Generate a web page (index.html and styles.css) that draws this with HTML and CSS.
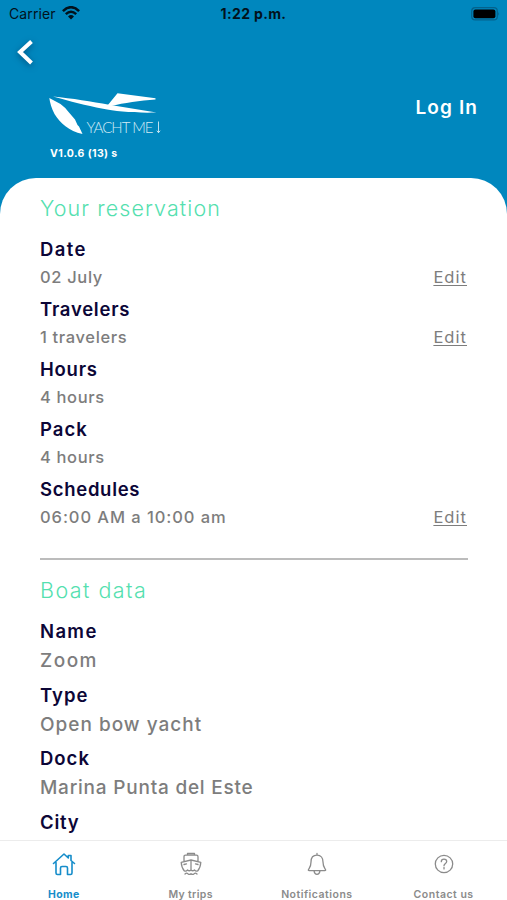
FILE: index.html
```html
<!DOCTYPE html>
<html lang="en">
<head>
<meta charset="utf-8">
<title>Yacht Me</title>
<link rel="stylesheet" href="styles.css">
</head>
<body>
<div class="app">
  <header class="top">
    <div class="status">
      <div class="carrier"><span>Carrier</span>
        <svg width="18" height="14" viewBox="0 0 18 14" fill="none" stroke="#02121c" stroke-width="2.5"><path d="M.9 5.100Q9-2.700 17.100 5.100M3.800 8.200Q9 3.400 14.200 8.200"/><path d="M6 10.400Q9 7.800 12 10.400L9 13.500Z" fill="#02121c" stroke="none"/></svg>
      </div>
      <div class="time">1:22 p.m.</div>
      <svg class="battery" width="29" height="14" viewBox="0 0 29 14"><rect x=".7" y=".7" width="25.600" height="12.200" rx="3.500" fill="none" stroke="#04628c" stroke-width="1.200"/><rect x="2.400" y="2.400" width="22" height="8.800" rx="2" fill="#000"/><path d="M27.300 4.800q1.600 2 0 4z" fill="#04628c"/></svg>
    </div>
    <svg class="back" width="28" height="34" viewBox="0 0 28 34" fill="none" stroke="#fff" stroke-width="4"><path d="M20.500 6.500L9 17L20.500 28"/></svg>
    <div class="brand-row">
      <div class="brand">
        <svg class="logo" width="114" height="44" viewBox="0 0 114 44" fill="#fff">
          <path d="M.3 6L11.500 12Q17 16 20 20.500L26 27.500L28.500 33L30 34.500L33.500 42C20 39 11 31 5.500 22C2.500 16 1 11 .3 6Z"/>
          <path d="M4 4.500C23 6.400 43 9.600 60 12.800L107.500 20.500C87 21.200 66 19.400 54 16.700C36 13.400 22 9.400 4 4.500Z"/>
          <path d="M58.500 13.500L68.500 1.200L106.500 6.300L106.500 7.500C91 8.500 75 11 62 14Z"/>
          <text x="37.500" y="41" class="logo-text" textLength="67">YACHT ME</text>
          <path d="M109.500 29.500v11.200M107.800 38.700l1.700 2 1.700-2" fill="none" stroke="#d3ebf5" stroke-width=".9"/>
        </svg>
        <div class="version">V1.0.6 (13) s</div>
      </div>
      <a class="login">Log In</a>
    </div>
  </header>
  <main class="sheet">
    <h2 class="title reservation">Your reservation</h2>
    <section class="rows">
      <div class="row"><h3 class="date">Date</h3><p><span class="v-date">02 July</span><a class="edit">Edit</a></p></div>
      <div class="row"><h3 class="travelers">Travelers</h3><p><span class="v-travelers">1 travelers</span><a class="edit">Edit</a></p></div>
      <div class="row"><h3 class="hours">Hours</h3><p><span class="v-hours">4 hours</span></p></div>
      <div class="row"><h3 class="pack">Pack</h3><p><span class="v-hours">4 hours</span></p></div>
      <div class="row"><h3 class="schedules">Schedules</h3><p><span class="v-schedules">06:00 AM a 10:00 am</span><a class="edit">Edit</a></p></div>
    </section>
    <hr>
    <h2 class="title boat">Boat data</h2>
    <section class="rows large">
      <div class="row"><h3 class="name">Name</h3><p><span class="v-name">Zoom</span></p></div>
      <div class="row"><h3 class="type">Type</h3><p><span class="v-type">Open bow yacht</span></p></div>
      <div class="row"><h3 class="dock">Dock</h3><p><span class="v-dock">Marina Punta del Este</span></p></div>
      <div class="row"><h3 class="city">City</h3></div>
    </section>
  </main>
  <nav class="tabs">
    <a class="tab active"><svg width="24" height="24" viewBox="0 0 24 24"><path d="M1.500 11.500L12 2l4.300 4V3.500H19v5l3.500 3M4 10.500v10.500q0 1.500 1.500 1.500H8.500v-6.500q0-1.500 1.500-1.500h4q1.500 0 1.500 1.500v6.500h3q1.500 0 1.500-1.500V10.500"/></svg><span class="t-home">Home</span></a>
    <a class="tab"><svg width="24" height="24" viewBox="0 0 24 24"><path d="M8.500 3.200V1.500h7v1.700M5 9V4.700q0-1.500 1.500-1.500h11q1.500 0 1.500 1.500V9M2.200 10.300L12 8l9.800 2.300q-.3 5.500-3.200 8.700-1.700.7-3.200-1-1.700 1.600-3.400 0-1.700 1.600-3.400 0-1.500 1.700-3.200 1Q2.500 15.800 2.200 10.300zM12 8v10M5 12.500l2.500-.6M19 12.500l-2.500-.6M6 22q1.600-1.500 2.900-.3 1.600 1.400 3.100 0 1.500 1.400 3.100 0 1.300-1.200 2.900.3"/></svg><span class="t-trips">My trips</span></a>
    <a class="tab"><svg width="24" height="24" viewBox="0 0 24 24"><path d="M12 3.200c-4 0-6 3-6 6.800 0 4.500-1.200 5.500-2.400 7.300q-.8 1.400.6 1.400h15.600q1.400 0 .6-1.400C19.200 15.500 18 14.500 18 10c0-3.800-2-6.800-6-6.800zM12 3.200V1.500M9 18.800q.6 3.500 3 3.500t3-3.500"/></svg><span class="t-notifications">Notifications</span></a>
    <a class="tab"><svg width="24" height="24" viewBox="0 0 24 24"><circle cx="12" cy="12" r="8.700"/><path d="M9.300 9.700q0-2.600 2.700-2.600t2.700 2.400c0 2-2.700 1.900-2.700 4.200M12 15.400v1.500"/></svg><span class="t-contact">Contact us</span></a>
  </nav>
</div>
</body>
</html>
```
FILE: styles.css
```css
* { box-sizing: border-box; }
body { margin: 0; font-family: Inter, "Liberation Sans", sans-serif; }
h2, h3, p { margin: 0; }
.app { width: 507px; height: 900px; display: flex; flex-direction: column; overflow: hidden; background: #0087be; }
.top { height: 178px; flex: none; color: #fff; }
.status { height: 28px; padding: 0 7px 0 9px; display: grid; grid-template-columns: 1fr auto 1fr; align-items: center; color: #02121c; font-size: 14px; line-height: 28px; }
.carrier { display: flex; align-items: center; gap: 6px; letter-spacing: .1px; }
.carrier svg { margin-bottom: 2px; }
.time { font-weight: 700; letter-spacing: .35px; margin-right: 2px; }
.battery { justify-self: end; }
.back { display: block; margin: 7px 0 0 11px; filter: drop-shadow(0 2px 3px rgba(0, 40, 80, .55)); }
.brand-row { display: flex; justify-content: space-between; padding: 23px 29px 0 49px; }
.brand { display: flex; flex-direction: column; }
.logo { display: block; }
.logo-text { font: 300 15px Lato, sans-serif; fill: #d3ebf5; }
.version { font-size: 10.500px; line-height: 14px; font-weight: 700; letter-spacing: .4px; margin: 11px 0 0 1px; }
.login { font-size: 19px; line-height: 30px; font-weight: 600; letter-spacing: 1.100px; margin-top: 1px; }
.sheet { flex: 1; min-height: 0; overflow: hidden; background: #fff; border-radius: 36px 36px 0 0; padding: 14px 39px 0 40px; }
.title { font-size: 21.500px; line-height: 32px; font-weight: 350; color: #55dfaf; letter-spacing: 1.080px; }
.boat { letter-spacing: 1.450px; }
.rows { display: flex; flex-direction: column; gap: 4px; margin-top: 11px; }
.row h3 { font-size: 18.500px; line-height: 28px; font-weight: 600; color: #0c0637; letter-spacing: .75px; }
.row .date, .row .name { letter-spacing: 1.350px; }
.row .pack, .row .type, .row .dock { letter-spacing: 1px; }
.row .schedules { letter-spacing: .7px; }
.row p { display: flex; justify-content: space-between; font-size: 16.500px; line-height: 28px; font-weight: 500; color: #7d7d7d; letter-spacing: .65px; }
.v-schedules { letter-spacing: .93px; }
.edit { font-weight: 400; text-decoration: underline; text-underline-offset: 2px; letter-spacing: 1.050px; margin-right: 1px; }
hr { height: 2px; border: 0; background: #bcbcbc; margin: 27px 0 14px; }
.large { gap: 3.500px; }
.large .row p { font-size: 19px; line-height: 32px; padding: 0; }
.large .v-name { letter-spacing: 1.500px; }
.large .v-type { letter-spacing: 1px; }
.large .v-dock { letter-spacing: .78px; }
.tabs { height: 60px; flex: none; background: #fff; border-top: 1px solid #ececec; display: grid; grid-template-columns: repeat(4, 1fr); }
.tab { display: flex; flex-direction: column; align-items: center; padding-top: 11px; color: #8b8b8b; font-size: 10.500px; font-weight: 600; line-height: 14px; letter-spacing: .5px; }
.tab svg { fill: none; stroke: currentColor; stroke-width: 1.300; stroke-linejoin: round; stroke-linecap: round; margin: 0 0 12px 1px; }
.t-home, .t-trips { letter-spacing: .35px; margin-left: 1px; }
.tab.active { color: #168dca; font-weight: 700; }
.tab.active svg { stroke-width: 1.600; }
```
